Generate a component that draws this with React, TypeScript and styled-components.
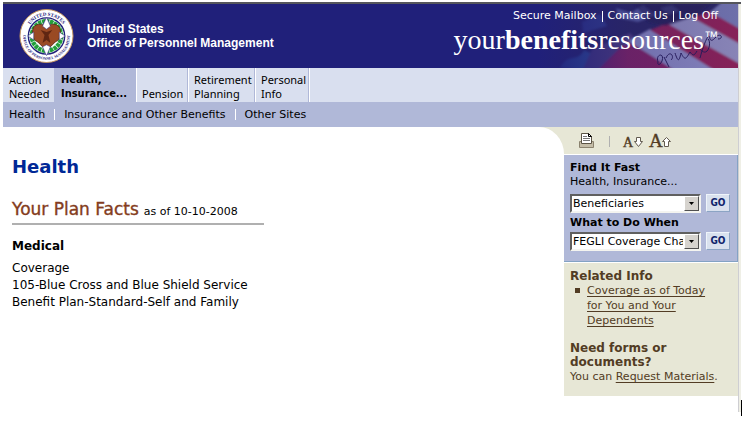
import React from "react";
import styled, { createGlobalStyle } from "styled-components";

const GlobalStyle = createGlobalStyle`
  * { box-sizing: border-box; }
  body { margin: 0; background: #fff; color: #000; font: 11px/15px "DejaVu Sans", Verdana, sans-serif; }
  h1, h2, h3, p, ul { margin: 0; padding: 0; }
`;

const Window = styled.div`
  display: flex;
  margin: 2px 5px 0 3px;
  border-top: 2px solid #55565c;
`;
const Page = styled.div`
  flex: 1;
  min-width: 0;
  padding-bottom: 16px;
  border-right: 1px solid #ceced2;
`;
const Gutter = styled.div`
  width: 2px;
  background: #efefe6;
`;
const Caret = styled.div`
  width: 1px;
  height: 16px;
  margin: -12px 4px 0 auto;
  background: #000;
`;

const Banner = styled.header`
  position: relative;
  display: flex;
  justify-content: space-between;
  height: 64px;
  background: #20207a;
  color: #fff;
  overflow: hidden;
`;
const FlagArt = styled.svg`
  position: absolute;
  right: 0;
  top: 0;
`;
const Agency = styled.div`
  display: flex;
  align-items: center;
  gap: 13px;
  padding-left: 16px;
  font: bold 12px/14px "Liberation Sans", Arial, sans-serif;
  white-space: nowrap;
`;
const Brand = styled.div`
  position: relative;
  padding: 4px 20px 0 0;
  white-space: nowrap;
`;
const Utilities = styled.nav`
  display: flex;
  justify-content: flex-end;
  line-height: 16px;
`;
const UtilityLink = styled.a`
  color: #fff;
  text-decoration: none;
  & + & { margin-left: 5px; padding-left: 6px; background: linear-gradient(#fff, #fff) 0 3px / 1px 11px no-repeat; }
`;
const Wordmark = styled.div`
  display: flex;
  justify-content: flex-end;
  font: 28px/32px "Liberation Serif", "Times New Roman", serif;
`;
const Trademark = styled.span`
  font: 14px/24px "Liberation Sans", Arial, sans-serif;
`;

const Tabs = styled.nav`
  display: flex;
  height: 34px;
  background: #d9dfef;
`;
const Tab = styled.a<{ $width: number; $active?: boolean }>`
  display: flex;
  align-items: flex-end;
  width: ${(p) => p.$width}px;
  padding: 0 0 1px 6px;
  border-right: 1px solid #b0b8d8;
  box-shadow: 1px 0 0 #fff;
  background: ${(p) => (p.$active ? "#b0b8d8" : "transparent")};
  color: #000;
  font: 11px/14px "Noto Sans", Tahoma, sans-serif;
  ${(p) => p.$active && `font-family: "DejaVu Sans Condensed", "DejaVu Sans", sans-serif; font-weight: bold;`}
  text-decoration: none;
  white-space: pre;
`;
const SubNav = styled.nav`
  display: flex;
  align-items: center;
  height: 25px;
  padding: 0 6px;
  background: #b0b8d8;
`;
const SubLink = styled.a`
  color: #000;
  text-decoration: none;
  & + & { margin-left: 9px; padding-left: 9px; border-left: 1px solid #fff; line-height: 11px; }
`;

const Body = styled.div`
  display: flex;
  align-items: flex-start;
`;
const Content = styled.main`
  flex: 1;
  min-width: 0;
  padding: 28px 9px 0;
`;
const Title = styled.h1`
  color: #002896;
  font-size: 18px;
  line-height: 24px;
`;
const FactsHeading = styled.div`
  display: flex;
  align-items: baseline;
  gap: 5px;
  width: 252px;
  margin-top: 20px;
  padding-bottom: 1px;
  border-bottom: 2px solid #b0b0b0;
  line-height: 20px;
  white-space: nowrap;
  h2 { color: #843c20; font-size: 17px; font-weight: normal; line-height: 20px; -webkit-text-stroke: thin #843c20; }
`;
const Plan = styled.section`
  margin-top: 13px;
  font-size: 12px;
  line-height: 17px;
  h3 { margin-bottom: 5px; font-size: 12px; }
`;

const Sidebar = styled.aside`
  flex: none;
  width: 199px;
`;
const Tools = styled.div`
  display: flex;
  height: 27px;
  background: #e7e7d6;
`;
const Curve = styled.div`
  width: 25px;
  border-top-right-radius: 25px 27px;
  background: #fff;
`;
const ToolList = styled.div`
  display: flex;
  align-items: center;
  padding-left: 15px;
`;
const ToolButton = styled.button`
  display: flex;
  padding: 0;
  border: 0;
  background: none;
`;
const Rule = styled.span`
  width: 1px;
  height: 11px;
  margin: 2px 13px 0 15px;
  background: #b0b0b0;
`;
const Panels = styled.div`
  margin-left: 25px;
`;
const Finder = styled.form`
  margin: 1px 0;
  padding: 6px 6px 7px;
  border: 1px solid #84a2c4;
  border-width: 0 1px 1px 0;
  background: #b0b8d8;
  line-height: 14px;
`;
const FinderLabel = styled.label`
  display: block;
  font-weight: bold;
`;
const Topic = styled.p`
  padding-bottom: 3px;
`;
const FinderRow = styled.div`
  display: flex;
  align-items: flex-start;
  gap: 5px;
  padding: 2px 0 3px;
`;
const SelectBox = styled.div`
  position: relative;
  width: 131px;
  height: 19px;
`;
const Select = styled.select`
  width: 100%;
  height: 100%;
  padding: 0 16px 0 1px;
  appearance: none;
  border: 2px solid;
  border-color: #606060 #f4f4f0 #f4f4f0 #606060;
  border-radius: 0;
  background: #fff;
  color: #000;
  font: 11px/15px "DejaVu Sans", Verdana, sans-serif;
`;
const Arrow = styled.span`
  position: absolute;
  top: 2px;
  right: 2px;
  display: flex;
  align-items: center;
  justify-content: center;
  width: 15px;
  height: 15px;
  border: 1px solid;
  border-color: #fff #505050 #505050 #fff;
  background: #d6d3ce;
  pointer-events: none;
`;
const Go = styled.button`
  width: 24px;
  height: 18px;
  padding: 0;
  border: 1px solid;
  border-color: #eef4fa #8ca4c4 #8ca4c4 #eef4fa;
  background: #d9e1ee;
  color: #10246c;
  font: bold 10px/14px "DejaVu Sans Condensed", "DejaVu Sans", sans-serif;
`;
const Info = styled.section`
  padding: 6px 6px 12px;
  background: #e7e7d6;
  color: #523c24;
  h2 { font-size: 12px; line-height: 14px; }
  a { color: inherit; text-underline-offset: 2px; }
  ul { margin-bottom: 13px; padding-left: 17px; list-style: none; }
`;
const InfoItem = styled.li`
  position: relative;
  padding-right: 20px;
  &::before { content: ""; position: absolute; left: -12px; top: 5px; width: 5px; height: 5px; background: currentColor; }
`;

function Seal() {
  return (
    <svg width="55" height="56" viewBox="0 0 56 56" overflow="visible" aria-label="OPM seal">
      <defs>
        <path id="ringTop" d="M7.5 28a20.5 20.5 0 0 1 41 0" />
        <path id="ringBottom" d="M15 8.5a23.8 23.8 0 1 0 26 0" />
      </defs>
      <circle cx="28" cy="28" r="27" fill="#fff" stroke="#c4945c" />
      <circle cx="28" cy="28" r="18.5" fill="#fff" stroke="#20207a" strokeWidth="1.4" />
      <circle cx="28" cy="28" r="15" fill="none" stroke="#23a03b" strokeWidth="4.5" strokeDasharray="3.5 .6" />
      <path d="M28 10l5 9 9 9-9 9-5 9-5-9-9-9 9-9z" fill="#fff" stroke="#20207a" strokeWidth=".7" />
      <path d="M28 19c4-4 10-4 13 0 3 6 1 13-4 15l-5 5h-8l-5-5c-5-2-7-9-4-15 3-4 9-4 13 0z" fill="#9a4a24" stroke="#4b210f" strokeWidth=".7" />
      <path d="M22 22l4 5-2 8 4-3 4 3-2-8 4-5-6 2z" fill="#5f2612" />
      <path d="M28 9l4 9-4 3-4-3zM28 48l4-9-4-2-4 2zM9 28l6-4v8zM47 28l-6-4v8z" fill="#fff" stroke="#20207a" strokeWidth=".5" />
      <g fill="#20207a" fontFamily="Liberation Serif" fontWeight="bold">
        <text fontSize="5"><textPath href="#ringTop" startOffset="50%" textAnchor="middle">UNITED STATES</textPath></text>
        <text fontSize="4"><textPath href="#ringBottom" startOffset="50%" textAnchor="middle">OFFICE OF PERSONNEL MANAGEMENT</textPath></text>
      </g>
    </svg>
  );
}

function Flag() {
  return (
    <FlagArt width="200" height="64" viewBox="0 0 200 64" aria-hidden="true">
      <defs>
        <linearGradient id="fade"><stop stopColor="#20207a" /><stop offset=".45" stopColor="#20207a" stopOpacity=".2" /><stop offset="1" stopColor="#20207a" stopOpacity="0" /></linearGradient>
        <filter id="soft"><feGaussianBlur stdDeviation="1" /></filter>
      </defs>
      <path fill="#2b2662" d="M0 0h200v64H0z" />
      <g filter="url(#soft)">
        <path d="M22 64c8-16 18-5 24-18l16 8-10 12z" fill="#31559a" />
        <path d="M78 4l15 5 12-8 13 10-18 7-19-4zM122 4l12-3 8 6-12 4z" fill="#555a9c" />
        <path d="M44 18l18-8 7 12-24 7z" fill="#35408a" />
        <path d="M54 45l38-16 12 12-28 24H45z" fill="#4b3a7c" />
        <path d="M60 66l22-22 12-6 44 28z" fill="#7c2262" />
        <path d="M90 37l22-12 66 41h-42z" fill="#8482ba" />
        <path d="M112 26l18-7 72 40v7h-26z" fill="#862058" />
        <path d="M130 20l25-7 47 26v21z" fill="#8884b6" />
        <path d="M155 14l17-7 30 17v16z" fill="#862458" />
        <path d="M172 8l12-10h18v27z" fill="#6e70aa" />
        <path d="M96 0h76l-18 13-26 9-18-4z" fill="#231c54" opacity=".6" />
      </g>
      <path d="M120 58c-3-8 7-10 4-1-2 5-5 4-4 1m6-5l5 10m-3-9c4-9 9-1 5 2m4-7c3 9 4 9 6 0 4 8 5 6 9-1 3 4 4 4 7-1m2-3c9 12 13-6 9-9m-8 19c5-18 8-22 9-22s0 9 7 1c5-5 8 2 2 2" fill="none" stroke="#281c59" />
      <path fill="url(#fade)" d="M0 0h200v64H0z" />
    </FlagArt>
  );
}

function PrinterIcon() {
  return (
    <svg width="15" height="15" viewBox="0 0 15 15">
      <path d="M.5 8.5h14v6H.5z" fill="#c4bda8" stroke="#8a826e" />
      <path d="M2.5.5h7l3 3v7h-10z" fill="#fff" stroke="#5a5344" />
      <path d="M9.5.5v3h3z" fill="#fff" stroke="#000" />
      <path d="M4 3.5h4M4 5.5h7M4 7.5h7" stroke="#777" />
    </svg>
  );
}

function SizeIcon({ large }: { large?: boolean }) {
  return (
    <svg width={large ? 24 : 26} height="18" viewBox={large ? "0 0 24 18" : "0 0 26 18"} overflow="visible">
      <text x="0" y="15" fontFamily="Liberation Serif" fontSize={large ? 19 : 14} fill="#523c24" stroke="#523c24" strokeWidth=".4">A</text>
      <path d={large ? "M17.5 5.5l-4 4h2v5h4v-5h2z" : "M13.5 5.5h4v4h2l-4 5-4-5h2z"} fill="#fff" stroke="#625b50" />
    </svg>
  );
}

function Picker({ id, value }: { id: string; value: string }) {
  return (
    <FinderRow>
      <SelectBox>
        <Select id={id}><option>{value}</option></Select>
        <Arrow><svg width="5" height="3" viewBox="0 0 5 3"><path d="M0 0h5L2.5 3z" /></svg></Arrow>
      </SelectBox>
      <Go type="submit">GO</Go>
    </FinderRow>
  );
}

const tabs = [
  { label: "Action\nNeeded", width: 52 },
  { label: "Health,\nInsurance...", width: 81, active: true },
  { label: "Pension", width: 52 },
  { label: "Retirement\nPlanning", width: 67 },
  { label: "Personal\nInfo", width: 54 },
];

export default function App() {
  return (
    <>
      <GlobalStyle />
      <Window>
        <Page>
          <Banner>
            <Flag />
            <Agency><Seal /><div>United States<br />Office of Personnel Management</div></Agency>
            <Brand>
              <Utilities>
                {["Secure Mailbox", "Contact Us", "Log Off"].map((l) => <UtilityLink href="#" key={l}>{l}</UtilityLink>)}
              </Utilities>
              <Wordmark><span>your<b>benefits</b>resources</span><Trademark>™</Trademark></Wordmark>
            </Brand>
          </Banner>
          <Tabs>
            {tabs.map((t) => <Tab href="#" key={t.label} $width={t.width} $active={t.active}>{t.label}</Tab>)}
          </Tabs>
          <SubNav>
            {["Health", "Insurance and Other Benefits", "Other Sites"].map((l) => <SubLink href="#" key={l}>{l}</SubLink>)}
          </SubNav>
          <Body>
            <Content>
              <Title>Health</Title>
              <FactsHeading><h2>Your Plan Facts</h2><span>as of 10-10-2008</span></FactsHeading>
              <Plan>
                <h3>Medical</h3>
                <p>Coverage<br />105-Blue Cross and Blue Shield Service<br />Benefit Plan-Standard-Self and Family</p>
              </Plan>
            </Content>
            <Sidebar>
              <Tools>
                <Curve />
                <ToolList>
                  <ToolButton aria-label="Print"><PrinterIcon /></ToolButton>
                  <Rule />
                  <ToolButton aria-label="Smaller text"><SizeIcon /></ToolButton>
                  <ToolButton aria-label="Larger text"><SizeIcon large /></ToolButton>
                </ToolList>
              </Tools>
              <Panels>
                <Finder>
                  <FinderLabel htmlFor="find">Find It Fast</FinderLabel>
                  <Topic>Health, Insurance...</Topic>
                  <Picker id="find" value="Beneficiaries" />
                  <FinderLabel htmlFor="when">What to Do When</FinderLabel>
                  <Picker id="when" value="FEGLI Coverage Changes" />
                </Finder>
                <Info>
                  <h2>Related Info</h2>
                  <ul><InfoItem><a href="#">Coverage as of Today for You and Your Dependents</a></InfoItem></ul>
                  <h2>Need forms or documents?</h2>
                  <p>You can <a href="#">Request Materials</a>.</p>
                </Info>
              </Panels>
            </Sidebar>
          </Body>
        </Page>
        <Gutter />
      </Window>
      <Caret />
    </>
  );
}
